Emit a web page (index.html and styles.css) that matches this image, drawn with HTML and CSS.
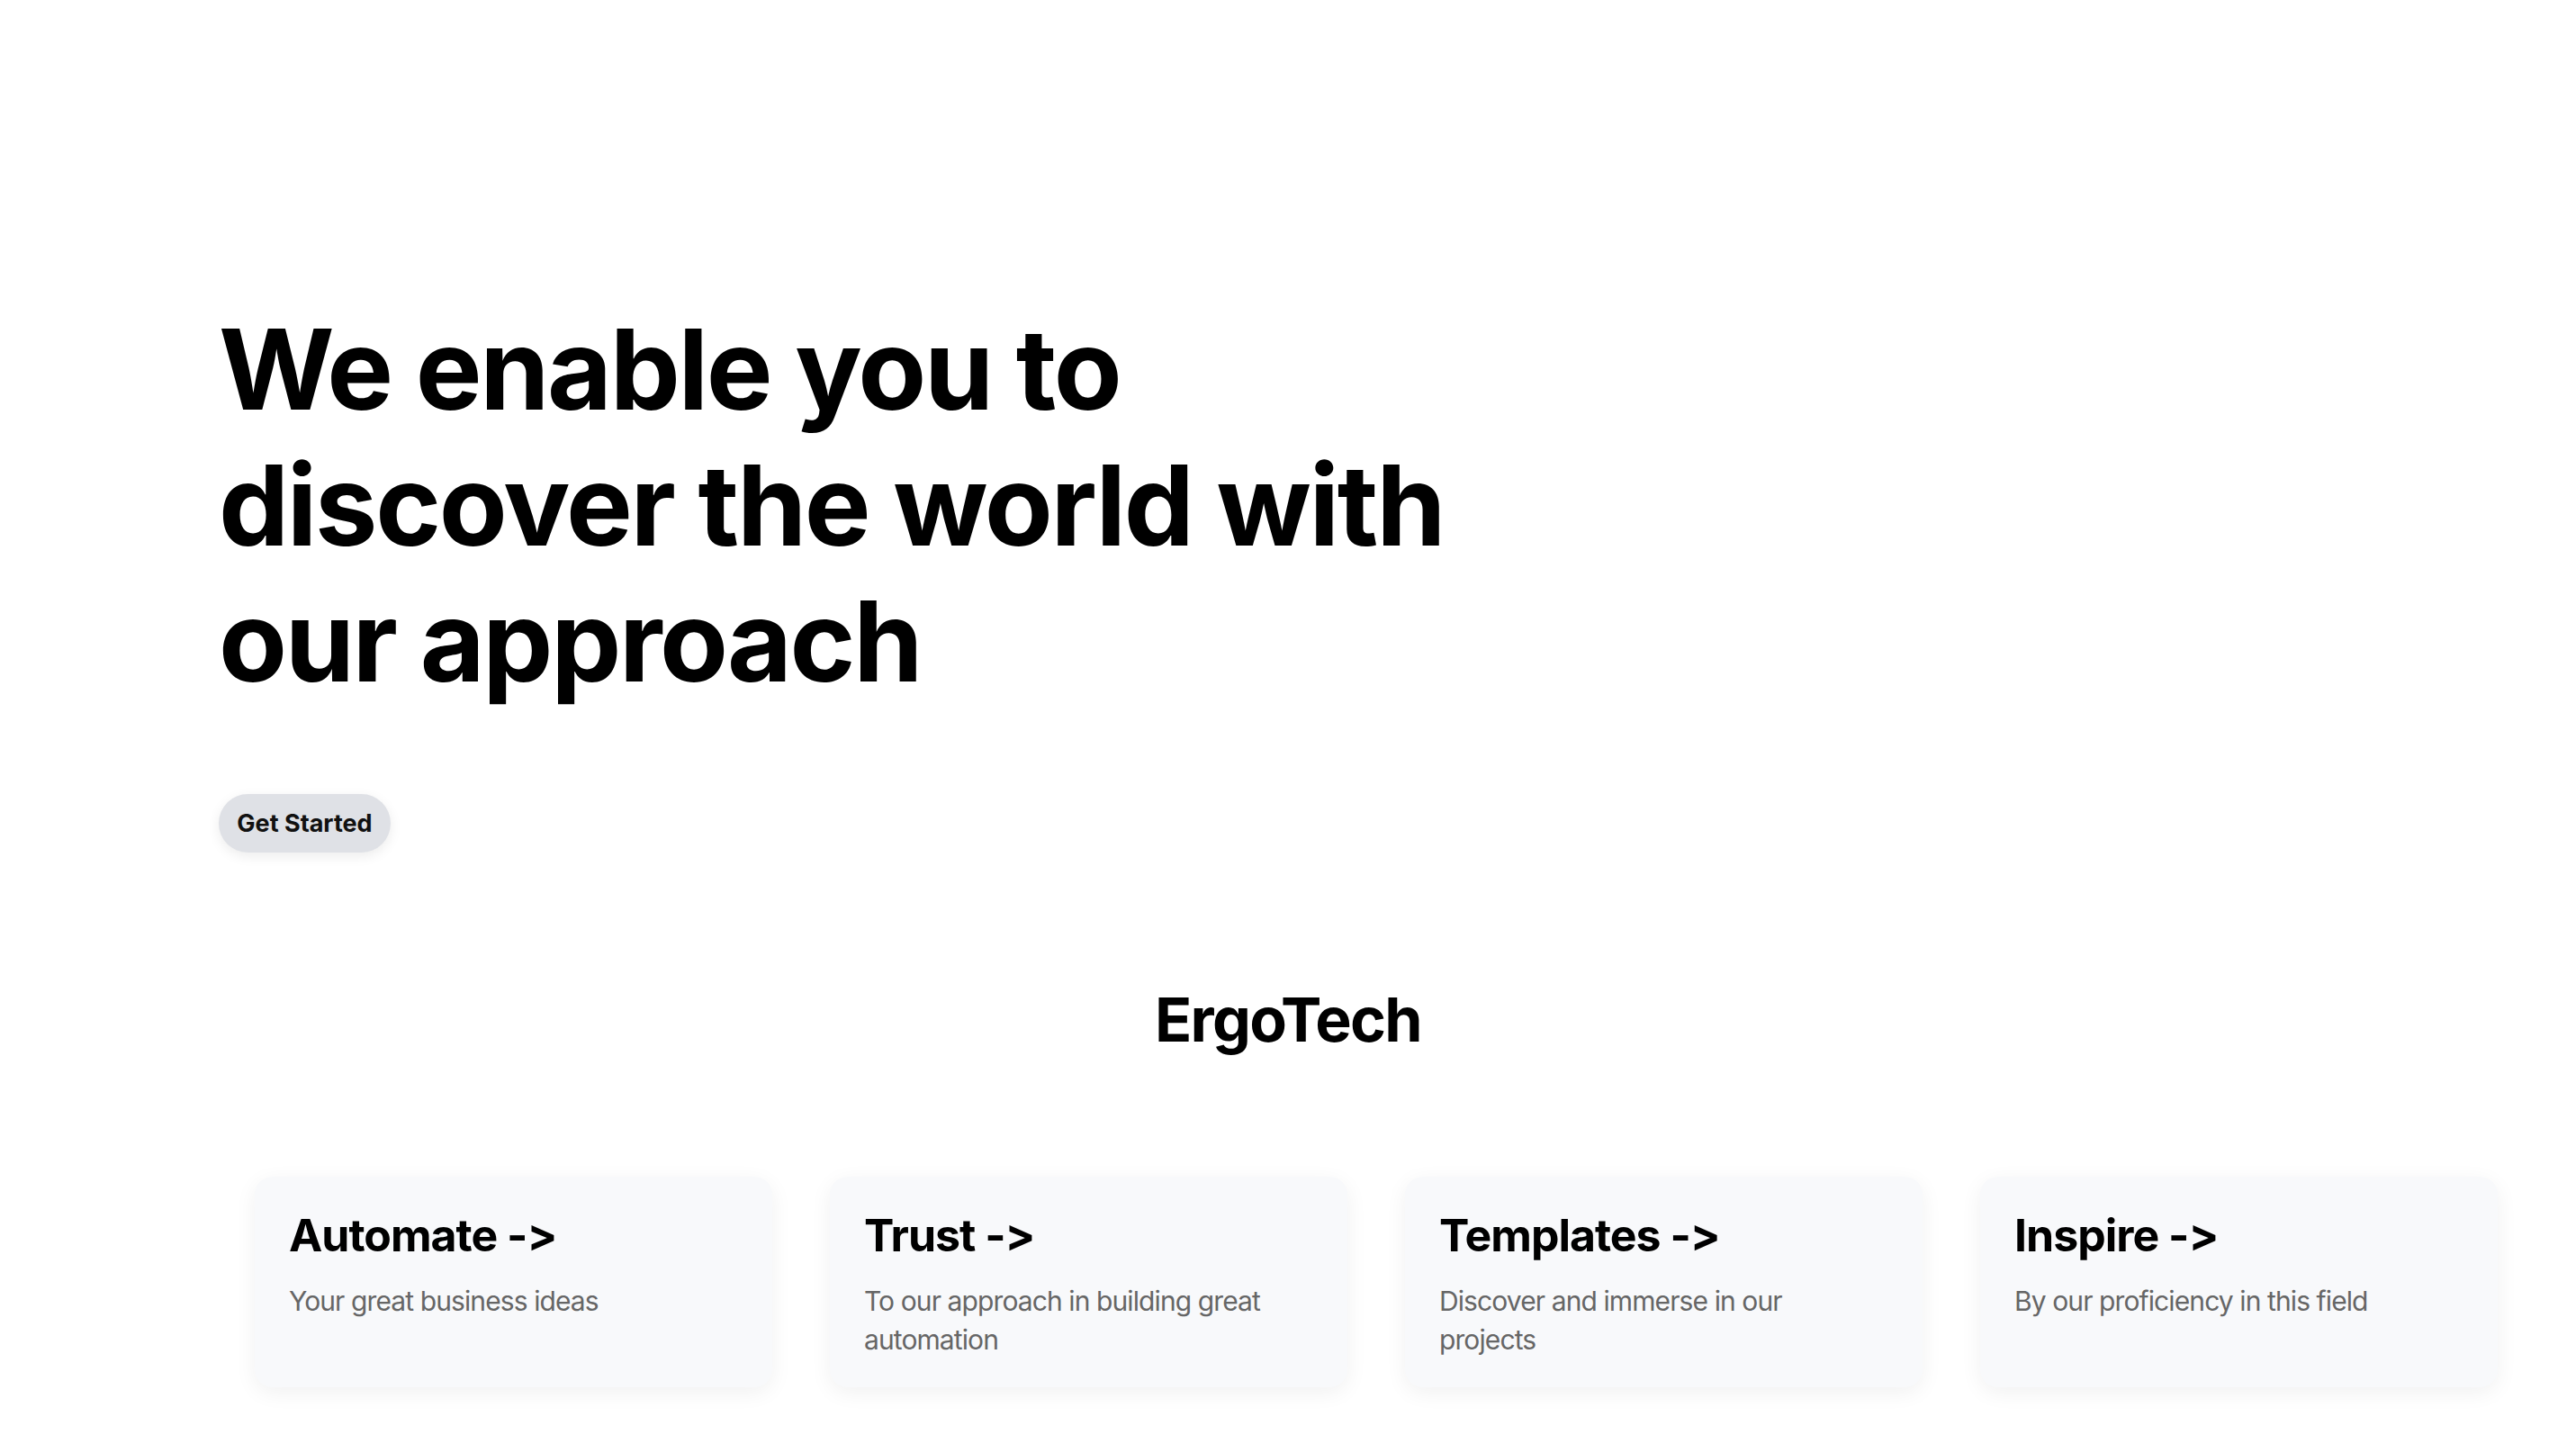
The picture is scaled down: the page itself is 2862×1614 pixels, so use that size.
FILE: index.html
```html
<!DOCTYPE html>
<html lang="en">
<head>
<meta charset="utf-8">
<title>ErgoTech</title>
<link rel="stylesheet" href="styles.css">
</head>
<body>
<main class="page">
  <section class="hero">
    <h1 class="hero-title">We enable you to<br>discover the world with<br>our approach</h1>
    <a class="btn" href="#">Get Started</a>
  </section>
  <h2 class="brand">ErgoTech</h2>
  <section class="cards">
    <div class="card">
      <h3 class="card-title">Automate -&gt;</h3>
      <p class="card-text">Your great business ideas</p>
    </div>
    <div class="card">
      <h3 class="card-title">Trust -&gt;</h3>
      <p class="card-text">To our approach in building great automation</p>
    </div>
    <div class="card">
      <h3 class="card-title">Templates -&gt;</h3>
      <p class="card-text">Discover and immerse in our projects</p>
    </div>
    <div class="card">
      <h3 class="card-title">Inspire -&gt;</h3>
      <p class="card-text">By our proficiency in this field</p>
    </div>
  </section>
</main>
</body>
</html>
```

FILE: styles.css
```css
* { box-sizing: border-box; }
html, body { margin: 0; padding: 0; background: #fff; }
body {
  font-family: Inter, "Liberation Sans", sans-serif;
  color: #000;
}
.page {
  width: 2862px;
  min-height: 1614px;
}
.hero {
  padding: 335px 0 0 243px;
}
.hero-title {
  margin: 0;
  font-size: 124px;
  line-height: 151px;
  font-weight: 700;
  letter-spacing: -0.019em;
}
.btn {
  display: inline-flex;
  align-items: center;
  justify-content: center;
  margin-top: 94px;
  width: 191px;
  height: 65px;
  border-radius: 33px;
  background: #dfe1e6;
  color: #111;
  font-size: 27px;
  font-weight: 700;
  letter-spacing: 0;
  text-decoration: none;
  box-shadow: 0 4px 14px rgba(0,0,0,0.08);
}
.brand {
  margin: 145px 0 0;
  text-align: center;
  font-size: 68px;
  line-height: 80px;
  font-weight: 700;
  letter-spacing: -0.025em;
}
.cards {
  margin-top: 135px;
  padding-left: 283px;
  display: grid;
  grid-template-columns: repeat(4, 575px);
  gap: 64px;
}
.card {
  height: 234px;
  padding: 35px 38px 0;
  background: #f8f9fb;
  border-radius: 20px;
  box-shadow: 0 6px 24px rgba(0,0,0,0.06);
}
.card-title {
  margin: 0;
  font-size: 50px;
  line-height: 60px;
  font-weight: 700;
  letter-spacing: -0.02em;
}
.card-text {
  margin: 22px 0 0;
  max-width: 470px;
  font-size: 30px;
  line-height: 43px;
  font-weight: 400;
  color: #666;
  letter-spacing: -0.03em;
}
```
